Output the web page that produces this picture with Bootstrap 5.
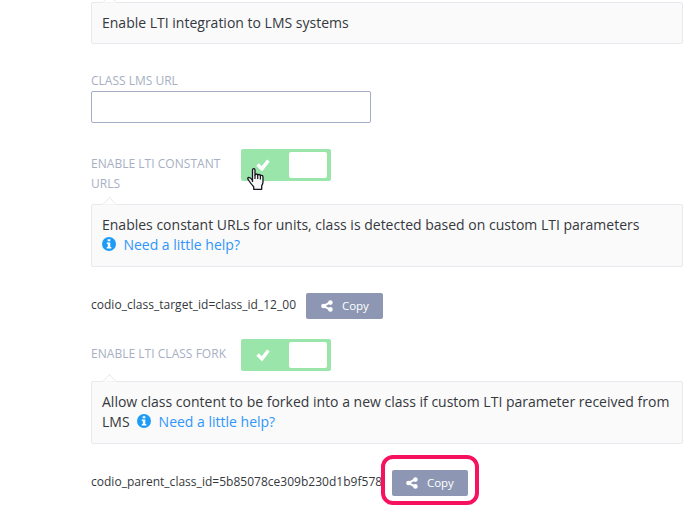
<!DOCTYPE html>
<html lang="en">
<head>
<meta charset="utf-8">
<meta name="viewport" content="width=device-width, initial-scale=1">
<title>LTI settings</title>
<link href="https://cdn.jsdelivr.net/npm/bootstrap@5.3.0/dist/css/bootstrap.min.css" rel="stylesheet">
<style>
body{font-family:"Open Sans",sans-serif;font-size:14px;line-height:20px;color:#35383d;background:#fff}
.settings{width:592px;margin-left:91px;padding-top:2px;height:527px}
.hint{background:#fafafa;border:1px solid #e8e8ee;border-radius:2px;padding:10px}
.hint::before{content:"";position:absolute;left:12px;top:-6px;width:11px;height:11px;background:#fff;border:1px solid #e8e8ee;border-right:0;border-bottom:0;transform:rotate(45deg);clip-path:polygon(0 0,100% 0,0 100%)}
.hint-tall{height:63px}
.hint a{color:#2f96fb}
.hint svg{margin:-4px 7.4px 0 0}
.caption{font-size:12px;color:#a7afc3;line-height:20px}
.url-caption{margin-top:27px}
.url-input{width:280px;height:32px;border:1px solid #a5acc5;border-radius:2px;padding:4px 8px}
.field-row{height:32px}
.field-row .caption{width:150px;padding:5px 10px 0 0;letter-spacing:.03px}
.first-switch{margin-top:26px}
.second-switch{margin-top:20px}
.switch{width:90px;height:32px;background:#9ae5a9;border-radius:2px;padding:3px 4px 3px 15px}
.knob{width:38px;height:26px;background:#fff;border-radius:2px}
.pointer{left:6px;top:19px}
.lower-hint{margin-top:23px}
.fork-hint{margin-top:10px}
.hint .inline-info{margin-left:4px}
.param{font-size:12px;height:26px;margin-top:26px}
.param-text{padding-bottom:2px;letter-spacing:.02px}
.first-param .param-text{width:215px}
.last-param .param-text{width:301px}
.btn-copy{width:77px;height:26px;background:#8d97b3;color:#fff;font-size:11.5px;line-height:20px;border:0;border-radius:2px;padding:0 0 0 15px}
.last-param .btn-copy{width:76px;padding-left:14px}
.btn-copy:hover{background:#7d88a6;color:#fff}
.copy-word{margin-left:9px;padding-bottom:1px;letter-spacing:-.1px}
.ring{border:4px solid #f6125f;border-radius:12px;left:-11px;top:-15px;width:98px;height:50px}
</style>
<script src="https://cdn.jsdelivr.net/npm/bootstrap@5.3.0/dist/js/bootstrap.bundle.min.js"></script>
</head>
<body>
<svg class="d-none" aria-hidden="true">
  <symbol id="check" viewBox="0 0 14 13"><path d="M.3 6.8 2.9 4.2 5.7 7.2 11 .6 13.8 2.6 6.1 12.4z" fill="#fff"/></symbol>
  <symbol id="share" viewBox="0 0 12 12"><path d="M9.5 2.2 2.5 6l7 3.8" fill="none" stroke="#fff" stroke-width="2"/><circle cx="2.5" cy="6" r="2.3" fill="#fff"/><circle cx="9.4" cy="2.6" r="2.3" fill="#fff"/><circle cx="9.4" cy="9.4" r="2.3" fill="#fff"/></symbol>
  <symbol id="info" viewBox="0 0 14 14"><circle cx="7" cy="7" r="7" fill="#1c9cf6"/><path d="M5.7 2.3h2.6v2H5.7zM4.8 5.4h3.5v4.5h1v1.6H4.8V9.9h1V7h-1z" fill="#fff"/></symbol>
</svg>
<main class="settings">
  <div class="hint position-relative">Enable LTI integration to LMS systems</div>

  <label class="caption d-block url-caption" for="url">CLASS LMS URL</label>
  <input id="url" type="text" class="form-control url-input shadow-none">

  <div class="field-row d-flex first-switch">
    <div class="caption">ENABLE LTI CONSTANT URLS</div>
    <div class="switch d-flex align-items-center justify-content-between position-relative">
      <svg width="14" height="13"><use href="#check"/></svg>
      <span class="knob"></span>
      <svg class="pointer position-absolute" width="18" height="23" viewBox="0 0 18 23"><path d="M5.5 14V2.2Q5.5.7 6.7.7T8 2.2V7q0-1 1.3-1 1.4 0 1.4 1.5 0-1 1.3-1 1.4 0 1.4 1.6 0-.8 1.1-.8 1.5 0 1.5 1.8v4.7q0 2-1.3 4.1v3.4H6.7v-2.5Q4 15.8 2.5 13.5L.9 11.2Q.4 9.5 2 9.3c1.5 0 2.4 1.3 3.5 3.2" fill="#f7f7f7" stroke="#15151f" stroke-width="1.3" stroke-linejoin="round"/><path d="M8 7v4M10.7 7.5V11M13.4 8v3.4" stroke="#15151f" stroke-width="1.2"/></svg>
    </div>
  </div>
  <div class="hint hint-tall position-relative lower-hint">Enables constant URLs for units, class is detected based on custom LTI parameters<br><svg width="14" height="14"><use href="#info"/></svg><a class="text-decoration-none" href="#">Need a little help?</a></div>

  <div class="param d-flex align-items-center first-param">
    <span class="param-text">codio_class_target_id=class_id_12_00</span>
    <button class="btn btn-copy d-flex align-items-center"><svg width="12" height="12"><use href="#share"/></svg><span class="copy-word">Copy</span></button>
  </div>

  <div class="field-row d-flex second-switch">
    <div class="caption">ENABLE LTI CLASS FORK</div>
    <div class="switch d-flex align-items-center justify-content-between">
      <svg width="14" height="13"><use href="#check"/></svg>
      <span class="knob"></span>
    </div>
  </div>
  <div class="hint hint-tall position-relative fork-hint">Allow class content to be forked into a new class if custom LTI parameter received from<br>LMS <svg class="inline-info" width="14" height="14"><use href="#info"/></svg><a class="text-decoration-none" href="#">Need a little help?</a></div>

  <div class="param d-flex align-items-center last-param">
    <span class="param-text">codio_parent_class_id=5b85078ce309b230d1b9f578</span>
    <div class="position-relative">
      <button class="btn btn-copy d-flex align-items-center"><svg width="12" height="12"><use href="#share"/></svg><span class="copy-word">Copy</span></button>
      <span class="ring position-absolute"></span>
    </div>
  </div>
</main>
</body>
</html>
